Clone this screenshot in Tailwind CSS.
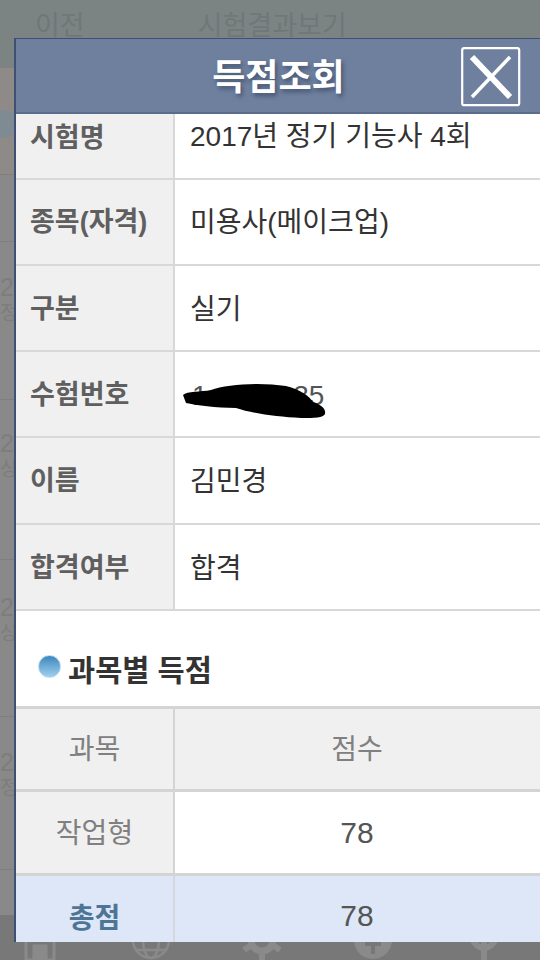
<!DOCTYPE html>
<html lang="ko">
<head>
    <meta charset="UTF-8">
    <meta name="viewport" content="width=device-width, initial-scale=1.0">
    <title>득점조회</title>
    <script src="https://cdn.jsdelivr.net/npm/@tailwindcss/browser@4"></script>
</head>
<body class="bg-[#898989] font-['Liberation_Sans','Noto_Sans_CJK_KR',sans-serif]">
<div class="relative w-[540px] h-[960px] overflow-hidden">

    <!-- page behind the dim layer -->
    <div class="h-[960px] flex flex-col text-[#7d7d7d]">
        <div class="h-[68px] shrink-0 bg-[#7b8482] flex items-start pt-[8px] pl-[35px] gap-[113px] text-[27px] leading-[36px] text-[#6f7878]">
            <span>이전</span>
            <span>시험결과보기</span>
        </div>
        <div class="h-[107px] shrink-0 border-b border-[#7f7f7f] bg-[#8d8a88] relative">
            <div class="absolute -left-[8px] top-[42px] w-[24px] h-[28px] rounded-full bg-[#7e8b92]"></div>
        </div>
        <div class="h-[67px] shrink-0 border-b border-[#7f7f7f]"></div>
        <div class="h-[158px] shrink-0 border-b border-[#7f7f7f] text-[25px] leading-[30px] pt-[30px]">2<div class="text-[20px] leading-[22px]">정</div></div>
        <div class="h-[160px] shrink-0 border-b border-[#7f7f7f] text-[25px] leading-[30px] pt-[28px]">2<div class="text-[20px] leading-[22px]">상</div></div>
        <div class="h-[157px] shrink-0 border-b border-[#7f7f7f] text-[25px] leading-[30px] pt-[32px]">2<div class="text-[20px] leading-[22px]">상</div></div>
        <div class="h-[153px] shrink-0 border-b border-[#7f7f7f] text-[25px] leading-[30px] pt-[30px]">2<div class="text-[20px] leading-[22px]">정</div></div>
        <div class="h-[45px] shrink-0"></div>
        <div class="flex-1 bg-[#787878] flex items-start -ml-[16px] pt-[5px]">
            <div class="w-[118px] flex justify-center">
                <svg width="40" height="40" viewBox="0 0 40 40" fill="none" stroke="#8a8a8a" stroke-width="3"><path d="M6 10v30h28V10"/><path d="M14 40V26h12v14" fill="#8a8a8a"/></svg>
            </div>
            <div class="w-[118px] flex justify-center">
                <svg width="40" height="40" viewBox="0 0 40 40" fill="none" stroke="#8a8a8a" stroke-width="2.5"><circle cx="20" cy="20" r="18"/><ellipse cx="20" cy="20" rx="8" ry="18"/><path d="M2 20h36M5 30h30"/></svg>
            </div>
            <div class="w-[118px] flex justify-center">
                <svg width="40" height="40" viewBox="0 0 40 40" fill="none" stroke="#8a8a8a" stroke-width="7"><circle cx="20" cy="20" r="11"/><path d="M20 0v6M20 34v6M2 10l6 4M32 26l6 4M2 30l6-4M32 14l6-4" stroke-width="6"/></svg>
            </div>
            <div class="w-[118px] flex justify-center">
                <svg width="40" height="40" viewBox="0 0 40 40"><circle cx="20" cy="20" r="19" fill="#8a8a8a"/><path d="M20 20v14M12 24h16" stroke="#787878" stroke-width="4"/></svg>
            </div>
            <div class="w-[118px] flex justify-center">
                <svg width="40" height="40" viewBox="0 0 40 40" fill="none" stroke="#8a8a8a" stroke-width="6"><path d="M5 4c0 14 7 24 15 24s15-10 15-24"/><path d="M20 20v20"/></svg>
            </div>
        </div>
    </div>

    <!-- modal -->
    <div class="absolute left-[14px] top-[38px] w-[540px] h-[904px] border-l-2 border-t border-[#3e5073] bg-white flex flex-col overflow-hidden">
        <div class="h-[75px] shrink-0 bg-[#6f809f] border-b-2 border-[#5b6c8d] relative">
            <div class="w-[525px] h-full flex items-center justify-center text-white text-[36px] font-bold leading-none pt-[4px] [text-shadow:2px_3px_4px_rgba(40,55,85,0.6)]">득점조회</div>
            <svg class="absolute left-[445px] top-[8px]" width="60" height="60" viewBox="0 0 60 60" fill="none" stroke="white">
                <rect x="1.2" y="1.2" width="57" height="57" rx="2" stroke-width="2.2"/>
                <path d="M11 10 49 50" stroke-width="6"/>
                <path d="M49 10 11 50" stroke-width="3.5"/>
            </svg>
        </div>

        <div class="grid grid-cols-[159px_1fr] text-[28px] text-[#333]">
            <div class="h-[66px] bg-[#f0f0f0] border-r-2 border-b-2 border-[#d8d8d8] pl-[14px] pt-[3px] leading-[42px] font-bold text-[27px] text-[#5f5f5f]">시험명</div>
            <div class="h-[66px] border-b-2 border-[#d8d8d8] pl-[15px] pt-[2px] leading-[42px]">2017년 정기 기능사 4회</div>

            <div class="h-[86px] bg-[#f0f0f0] border-r-2 border-b-2 border-[#d8d8d8] pl-[14px] pt-[1px] flex items-center font-bold text-[27px] text-[#5f5f5f]">종목(자격)</div>
            <div class="h-[86px] border-b-2 border-[#d8d8d8] pl-[15px] pt-[2px] flex items-center">미용사(메이크업)</div>

            <div class="h-[86px] bg-[#f0f0f0] border-r-2 border-b-2 border-[#d8d8d8] pl-[14px] pt-[2px] flex items-center font-bold text-[27px] text-[#5f5f5f]">구분</div>
            <div class="h-[86px] border-b-2 border-[#d8d8d8] pl-[15px] pt-[3px] flex items-center">실기</div>

            <div class="h-[86px] bg-[#f0f0f0] border-r-2 border-b-2 border-[#d8d8d8] pl-[14px] pt-[3px] flex items-center font-bold text-[27px] text-[#5f5f5f]">수험번호</div>
            <div class="h-[86px] border-b-2 border-[#d8d8d8] pl-[15px] pt-[3px] flex items-center relative">
                <span class="pl-[2px] text-[#555]">1&nbsp;&nbsp;&nbsp;&nbsp;&nbsp;&nbsp;&nbsp;&nbsp;&nbsp;&nbsp;&nbsp;35</span>
                <!-- redaction scribble over the number -->
                <svg class="absolute left-[6px] top-[26px]" width="146" height="42" viewBox="0 0 146 42" fill="black"><path d="M2 17C6 13 20 14 30 12 45 6 80 4 105 8 120 12 128 18 132 24 140 27 145 30 144 36 142 40 134 40 120 40 95 39 70 35 55 30 35 30 15 27 5 25 0 21 2 17z"/></svg>
            </div>

            <div class="h-[87px] bg-[#f0f0f0] border-r-2 border-b-2 border-[#d8d8d8] pl-[14px] pt-[2px] flex items-center font-bold text-[27px] text-[#5f5f5f]">이름</div>
            <div class="h-[87px] border-b-2 border-[#d8d8d8] pl-[15px] pt-[3px] flex items-center">김민경</div>

            <div class="h-[86px] bg-[#f0f0f0] border-r-2 border-b-2 border-[#d8d8d8] pl-[14px] pt-[2px] flex items-center font-bold text-[27px] text-[#5f5f5f]">합격여부</div>
            <div class="h-[86px] border-b-2 border-[#d8d8d8] pl-[15px] pt-[3px] flex items-center">합격</div>
        </div>

        <div class="h-[95px] shrink-0 flex items-center pl-[22px] pt-[24px] gap-[7px]">
            <span class="w-[23px] h-[23px] -mt-[8px] rounded-full border border-[#b5dcef] bg-gradient-to-b from-[#3b87bd] to-[#9fd0ee]"></span>
            <span class="text-[29.5px] font-bold text-[#333] leading-none">과목별 득점</span>
        </div>

        <div class="grid grid-cols-[159px_1fr] border-t-[3px] border-[#d4d4d4] text-center text-[28px]">
            <div class="h-[83px] bg-[#f0f0f0] border-r-2 border-b-[3px] border-[#d4d4d4] flex items-center justify-center text-[#808080] pt-[2px]">과목</div>
            <div class="h-[83px] bg-[#f0f0f0] border-b-[3px] border-[#d4d4d4] flex items-center justify-center text-[#808080] pr-[15px] pt-[2px]">점수</div>
            <div class="h-[84px] bg-[#f0f0f0] border-r-2 border-b-[3px] border-[#d4d4d4] flex items-center justify-center text-[#808080] pt-[2px]">작업형</div>
            <div class="h-[84px] border-b-[3px] border-[#d4d4d4] flex items-center justify-center text-[#555] pr-[15px] text-[30px]">78</div>
            <div class="h-[66px] bg-[#dde7f8] border-r-2 border-[#d4d8de] flex items-center justify-center font-bold text-[#4f7596] pt-[20px]">총점</div>
            <div class="h-[66px] bg-[#dde7f8] flex items-center justify-center text-[#555] pr-[15px] pt-[12px] text-[30px]">78</div>
        </div>
    </div>
</div>
</body>
</html>
